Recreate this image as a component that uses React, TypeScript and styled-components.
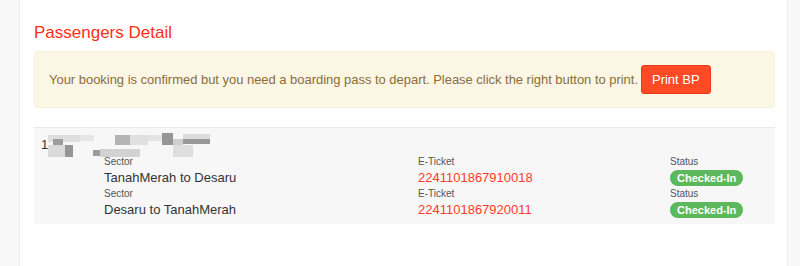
import * as React from 'react';
import styled, { createGlobalStyle } from 'styled-components';

const GlobalStyle = createGlobalStyle`
  html, body {
    margin: 0;
    background: #f8f8f8;
    font-family: "Liberation Sans", Arial, sans-serif;
  }
`;

const Panel = styled.div`
  margin-left: 19px;
  width: 769px;
  min-height: 266px;
  box-sizing: border-box;
  background: #fff;
  border-left: 1px solid #efefef;
  border-right: 1px solid #efefef;
  padding: 22px 12px 0 14px;
`;

const Heading = styled.h4`
  margin: 0 0 8px;
  font-size: 17px;
  line-height: 21px;
  font-weight: 400;
  color: #ff2f17;
`;

const Alert = styled.div`
  display: flex;
  align-items: center;
  gap: 3px;
  padding: 13px 14px;
  background: #fcf7e4;
  border: 1px solid #f8f0d8;
  border-radius: 4px;
  color: #8a6d3b;
  font-size: 13px;
  letter-spacing: -0.03px;
  margin-bottom: 19px;
  white-space: nowrap;
`;

const PrintButton = styled.button`
  flex: none;
  height: 29px;
  padding: 0 10px;
  background: #ff4a26;
  border: 1px solid #e8381a;
  border-radius: 3px;
  color: #fff;
  font-family: inherit;
  font-size: 13px;
  cursor: pointer;
`;

const Table = styled.div`
  background: #f7f7f7;
  border-top: 1px solid #e9e9e9;
  padding: 7px 7px 5px;
`;

const NameLine = styled.div`
  display: flex;
  align-items: flex-start;
  height: 20px;
  font-size: 13px;
  line-height: 20px;
  color: #333;
`;

const Blur = styled.svg`
  position: relative;
  z-index: 1;
  margin-top: -4px;
  flex: none;
`;

const Trip = styled.div`
  display: grid;
  grid-template-columns: 314px 252px 1fr;
  margin-left: 63px;
`;

const Label = styled.div`
  font-size: 10px;
  line-height: 13px;
  color: #555;
`;

const Value = styled.div<{ $red?: boolean }>`
  font-size: 13px;
  line-height: 19px;
  color: ${p => (p.$red ? '#ff3a26' : '#333')};
`;

const Badge = styled.span`
  display: inline-block;
  margin-top: 2px;
  padding: 0 7px;
  height: 16px;
  line-height: 16px;
  border-radius: 8px;
  background: #5cb85c;
  color: #fff;
  font-size: 11px;
  font-weight: 700;
  vertical-align: top;
`;

const mosaic: [number, number, number, number, string][] = [
  [0, 4, 32, 7, '#dedede'],
  [5, 8, 10, 6, '#9c9c9c'],
  [0, 14, 17, 12, '#dadada'],
  [17, 14, 8, 12, '#959595'],
  [32, 4, 14, 6, '#e6e6e6'],
  [45, 19, 7, 6, '#9c9c9c'],
  [52, 18, 40, 8, '#d2d2d2'],
  [67, 4, 15, 10, '#b4b4b4'],
  [82, 4, 18, 10, '#e0e0e0'],
  [100, 4, 14, 6, '#e4e4e4'],
  [114, 2, 11, 12, '#969696'],
  [125, 14, 20, 12, '#dedede'],
  [125, 8, 10, 6, '#cecece'],
  [135, 8, 27, 5, '#989898'],
  [135, 3, 27, 5, '#dcdcdc'],
];

const trips = [
  { sector: 'TanahMerah to Desaru', ticket: '2241101867910018' },
  { sector: 'Desaru to TanahMerah', ticket: '2241101867920011' },
];

const App: React.FC = () => (
  <>
    <GlobalStyle />
    <Panel>
      <Heading>Passengers Detail</Heading>
      <Alert>
        <span>
          Your booking is confirmed but you need a boarding pass to depart. Please click the right button to print.
        </span>
        <PrintButton>Print BP</PrintButton>
      </Alert>
      <Table>
        <NameLine>
          1
          <Blur width="162" height="28" viewBox="0 0 162 28">
            {mosaic.map(([x, y, w, h, c], i) => (
              <rect key={i} x={x} y={y} width={w} height={h} fill={c} />
            ))}
          </Blur>
        </NameLine>
        {trips.map(t => (
          <Trip key={t.ticket}>
            <div>
              <Label>Sector</Label>
              <Value>{t.sector}</Value>
            </div>
            <div>
              <Label>E-Ticket</Label>
              <Value $red>{t.ticket}</Value>
            </div>
            <div>
              <Label>Status</Label>
              <Value>
                <Badge>Checked-In</Badge>
              </Value>
            </div>
          </Trip>
        ))}
      </Table>
    </Panel>
  </>
);

export default App;
